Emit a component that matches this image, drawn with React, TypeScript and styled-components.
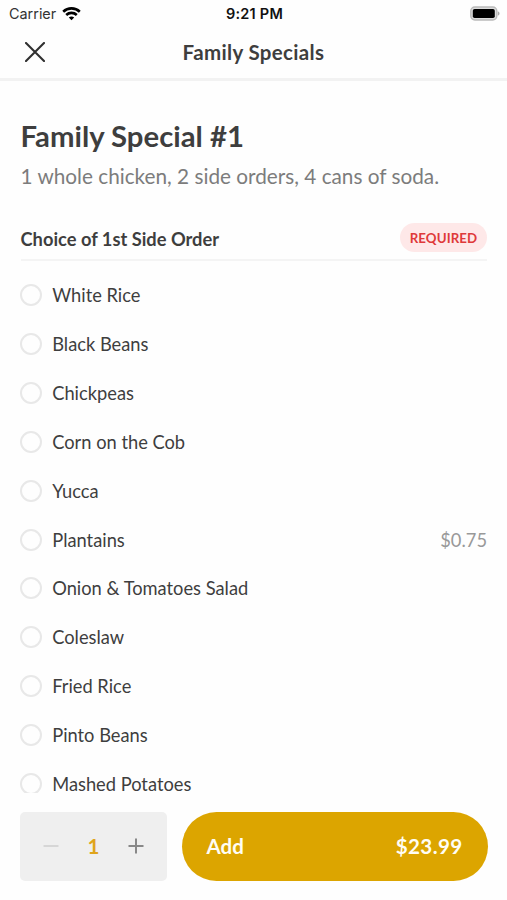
import React, { useState } from "react";
import styled, { createGlobalStyle } from "styled-components";

const GlobalStyle = createGlobalStyle`
  * { box-sizing: border-box; }
  html, body { margin: 0; background: #fefefe; overflow: hidden; }
  button { font: inherit; border: 0; background: none; padding: 0; cursor: pointer; }
`;

const Screen = styled.div`
  width: 507px;
  height: 900px;
  display: flex;
  flex-direction: column;
  overflow: hidden;
  background: #fefefe;
  color: #3e3e3e;
  font-family: Lato, sans-serif;
`;

const StatusBar = styled.div`
  flex: none;
  height: 27px;
  display: grid;
  grid-template-columns: 1fr auto 1fr;
  align-items: center;
  padding: 0 7px 0 9px;
  font-family: Inter, sans-serif;
  line-height: 27px;
  color: #111;
`;

const Carrier = styled.div`
  display: flex;
  align-items: center;
  gap: 6px;
  font-size: 14.4px;
  color: #333;
`;

const Clock = styled.div`
  font-size: 14.5px;
  font-weight: 600;
  letter-spacing: 0.25px;
`;

const BatterySlot = styled.div`
  display: flex;
  justify-content: flex-end;
`;

const NavBar = styled.header`
  flex: none;
  height: 54px;
  display: grid;
  grid-template-columns: 70px 1fr 70px;
  align-items: center;
  padding-bottom: 2px;
  border-bottom: 3px solid #f2f2f2;
`;

const CloseButton = styled.button`
  display: flex;
  justify-content: center;
  align-items: center;
`;

const NavTitle = styled.div`
  text-align: center;
  font-size: 20.5px;
  letter-spacing: 0.35px;
  font-weight: 700;
  line-height: 24px;
`;

const Content = styled.main`
  height: 712px;
  flex: none;
  overflow: hidden;
  padding: 37px 20px 0 20.5px;
`;

const Title = styled.h1`
  margin: 0;
  font-size: 29.3px;
  line-height: 36px;
  font-weight: 700;
`;

const Description = styled.p`
  margin: 9px 0 0;
  font-size: 20.75px;
  line-height: 26px;
  color: #7c7c7c;
`;

const GroupHeader = styled.div`
  margin-top: 33px;
  height: 39px;
  display: flex;
  align-items: flex-start;
  justify-content: space-between;
  border-bottom: 2px solid #f4f4f4;
`;

const GroupTitle = styled.h2`
  margin: 0;
  font-size: 18.3px;
  line-height: 34px;
  font-weight: 700;
`;

const Badge = styled.span`
  width: 87px;
  height: 29px;
  margin-top: 1px;
  border-radius: 15px;
  background: #fee8e8;
  color: #df3a3a;
  text-align: center;
  font-size: 13.3px;
  letter-spacing: 0.1px;
  line-height: 30px;
  font-weight: 700;
`;

const Options = styled.div`
  display: flex;
  flex-direction: column;
  padding-top: 9.8px;
`;

const Option = styled.div`
  flex: none;
  height: 48.86px;
  display: flex;
  align-items: center;
  font-size: 18.3px;
  line-height: 24px;
  cursor: pointer;
`;

const Radio = styled.span<{ $selected: boolean }>`
  width: 22px;
  height: 22px;
  margin-right: 10px;
  margin-left: -0.3px;
  border-radius: 50%;
  border: ${(p) => (p.$selected ? "7px solid #dca500" : "2px solid #e8e8e8")};
`;

const Price = styled.span`
  margin-left: auto;
  color: #999;
`;

const Footer = styled.footer`
  flex: 1;
  display: flex;
  align-items: flex-start;
  gap: 15px;
  padding: 19px 19.5px 0 20px;
`;

const Stepper = styled.div`
  width: 147px;
  height: 68.5px;
  padding: 0 23px 1px;
  display: flex;
  align-items: center;
  justify-content: space-between;
  border-radius: 5px;
  background: #efefef;
`;

const StepButton = styled.button`
  display: flex;
`;

const Quantity = styled.span`
  color: #dfa51c;
  font-size: 20.5px;
  line-height: 26px;
  font-weight: 700;
`;

const AddButton = styled.button`
  && {
    flex: 1;
    height: 68.5px;
    display: flex;
    align-items: center;
    justify-content: space-between;
    padding: 0 25px 1px 24.5px;
    border-radius: 35px;
    background: #dca500;
    color: #fffdf5;
    font-size: 20.5px;
    line-height: 26px;
    font-weight: 700;
  }
`;

const Total = styled.span`
  font-size: 20.6px;
  letter-spacing: 0.35px;
`;

const WifiIcon = () => (
  <svg width="19" height="14" viewBox="0 0 19 14" fill="none" stroke="#000" strokeWidth="2.6">
    <path d="M1.2 4.7C5.8.3 13.2.3 17.8 4.7" />
    <path d="M4.2 8c3-2.8 7.6-2.8 10.6 0" />
    <path d="M6.8 10.4 9.5 13.2l2.7-2.8c-1.6-1.3-3.8-1.3-5.4 0Z" fill="#000" stroke="none" />
  </svg>
);

const BatteryIcon = () => (
  <svg width="31" height="15" viewBox="0 0 31 15">
    <rect x="1.8" y="1" width="26" height="13" rx="4" fill="#ddd" stroke="#bababa" strokeWidth="1.4" />
    <rect x="3.8" y="3" width="22" height="9" rx="1.8" fill="#000" />
    <path d="M28.8 5.3c2.3.8 2.3 3.6 0 4.4Z" fill="#aaa" />
  </svg>
);

const CloseIcon = () => (
  <svg width="20" height="20" viewBox="0 0 20 20" stroke="#303030" strokeWidth="2.1" strokeLinecap="round">
    <path d="M1 1 19 19M19 1 1 19" />
  </svg>
);

const StepIcon = ({ plus }: { plus?: boolean }) => (
  <svg width="16" height="16" viewBox="0 0 16 16" stroke={plus ? "#888" : "#d6d6d6"} strokeWidth="2">
    <path d={plus ? "M.5 8h15M8 .5v15" : "M.5 8h15"} />
  </svg>
);

const sides: { name: string; price?: string }[] = [
  { name: "White Rice" },
  { name: "Black Beans" },
  { name: "Chickpeas" },
  { name: "Corn on the Cob" },
  { name: "Yucca" },
  { name: "Plantains", price: "$0.75" },
  { name: "Onion & Tomatoes Salad" },
  { name: "Coleslaw" },
  { name: "Fried Rice" },
  { name: "Pinto Beans" },
  { name: "Mashed Potatoes" },
];

export default function App() {
  const [selected, setSelected] = useState<string | null>(null);
  const [quantity, setQuantity] = useState(1);

  return (
    <Screen>
      <GlobalStyle />
      <StatusBar>
        <Carrier>
          Carrier
          <WifiIcon />
        </Carrier>
        <Clock>9:21 PM</Clock>
        <BatterySlot>
          <BatteryIcon />
        </BatterySlot>
      </StatusBar>
      <NavBar>
        <CloseButton aria-label="Close">
          <CloseIcon />
        </CloseButton>
        <NavTitle>Family Specials</NavTitle>
      </NavBar>
      <Content>
        <Title>Family Special #1</Title>
        <Description>1 whole chicken, 2 side orders, 4 cans of soda.</Description>
        <GroupHeader>
          <GroupTitle>Choice of 1st Side Order</GroupTitle>
          <Badge>REQUIRED</Badge>
        </GroupHeader>
        <Options role="radiogroup">
          {sides.map((side) => (
            <Option
              key={side.name}
              role="radio"
              aria-checked={selected === side.name}
              onClick={() => setSelected(side.name)}
            >
              <Radio $selected={selected === side.name} />
              {side.name}
              {side.price && <Price>{side.price}</Price>}
            </Option>
          ))}
        </Options>
      </Content>
      <Footer>
        <Stepper>
          <StepButton aria-label="Decrease" onClick={() => setQuantity(Math.max(1, quantity - 1))}>
            <StepIcon />
          </StepButton>
          <Quantity>{quantity}</Quantity>
          <StepButton aria-label="Increase" onClick={() => setQuantity(quantity + 1)}>
            <StepIcon plus />
          </StepButton>
        </Stepper>
        <AddButton>
          <span>Add</span>
          <Total>${(23.99 * quantity).toFixed(2)}</Total>
        </AddButton>
      </Footer>
    </Screen>
  );
}
